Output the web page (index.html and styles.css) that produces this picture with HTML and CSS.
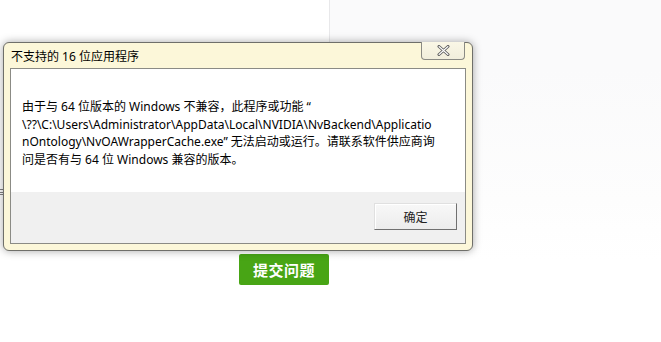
FILE: index.html
```html
<!DOCTYPE html>
<html lang="zh-CN">
<head>
<meta charset="utf-8">
<link rel="stylesheet" href="styles.css">
</head>
<body>
<div class="page">
  <div class="left-pane">
    <div class="spacer"></div>
    <div class="actions"><button class="submit">提交问题</button></div>
  </div>
  <div class="right-pane">
    <div class="right-top"></div>
  </div>
  <div class="edge-mark">≡</div>

  <div class="dialog">
    <div class="titlebar">
      <span class="title">不支持的 16 位应用程序</span>
      <div class="close">
        <svg width="13" height="11" viewBox="0 0 13 11"><path d="M2 1.5 L11 9.5 M11 1.5 L2 9.5" stroke="#5a5a5a" stroke-width="3" stroke-linecap="round"/><path d="M2 1.5 L11 9.5 M11 1.5 L2 9.5" stroke="#ffffff" stroke-width="1.1" stroke-linecap="round"/></svg>
      </div>
    </div>
    <div class="client">
      <div class="message">
        <p>由于与 64 位版本的 Windows 不兼容，此程序或功能 “<br>\??\C:\Users\Administrator\AppData\Local\NVIDIA\NvBackend\Applicatio<br>nOntology\NvOAWrapperCache.exe” 无法启动或运行。请联系软件供应商询<br>问是否有与 64 位 Windows 兼容的版本。</p>
      </div>
      <div class="footer">
        <button class="ok">确定</button>
      </div>
    </div>
  </div>
</div>
</body>
</html>
```
FILE: styles.css
```css
* { box-sizing: border-box; }
html, body { margin: 0; padding: 0; }
body {
  width: 661px;
  height: 342px;
  overflow: hidden;
  font-family: "Noto Sans", "Noto Sans CJK SC", sans-serif;
  background: #ffffff;
}
.page {
  position: relative;
  display: flex;
  width: 661px;
  height: 342px;
}
.left-pane {
  width: 329px;
  height: 342px;
  background: #ffffff;
  display: flex;
  flex-direction: column;
}
.spacer { height: 254px; }
.actions {
  display: flex;
  padding-left: 239px;
}
.submit {
  width: 90px;
  height: 31px;
  border: none;
  border-radius: 2px;
  background: #48a515;
  color: #ffffff;
  font-family: "Noto Sans CJK SC", sans-serif;
  font-size: 15px;
  font-weight: 700;
  letter-spacing: 0.5px;
  padding: 0;
}
.right-pane {
  flex: 1;
  background: linear-gradient(#fafafb 0, #fafafb 70px, #fdfdfd 200px, #ffffff 260px);
  display: flex;
  flex-direction: column;
}
.right-top {
  height: 250px;
  border-left: 1px solid #e8e8ea;
}
.edge-mark {
  position: absolute;
  left: -4px;
  top: 183px;
  font-size: 12px;
  color: #666;
}

.dialog {
  position: absolute;
  left: 3px;
  top: 42px;
  width: 470px;
  height: 209px;
  background: #fcf7d9;
  border: 1px solid #6f6f6a;
  border-radius: 6px;
  box-shadow: 0 0 8px rgba(0,0,0,0.35);
  display: flex;
  flex-direction: column;
  padding: 0 6px 6px 6px;
}
.titlebar {
  height: 25px;
  display: flex;
  align-items: flex-start;
  justify-content: space-between;
}
.title {
  font-family: "Noto Sans", "Noto Sans CJK SC", sans-serif;
  font-size: 12px;
  color: #000;
  padding-top: 4px;
  padding-left: 1px;
}
.close {
  width: 44px;
  height: 18px;
  margin-top: -1px;
  margin-right: 1px;
  border: 1px solid #8a8a84;
  border-top: none;
  border-radius: 0 0 4px 4px;
  background: linear-gradient(#faf7e6, #f1eedc);
  display: flex;
  align-items: center;
  justify-content: center;
}
.client {
  flex: 1;
  display: flex;
  flex-direction: column;
  border: 1px solid #8b8b85;
  background: #ffffff;
}
.message {
  height: 123px;
  padding: 29px 0 0 11px;
  background: #ffffff;
}
.message p {
  margin: 0;
  font-size: 12px;
  line-height: 17.5px;
  color: #000;
}
.footer {
  flex: 1;
  background: #f0f0f0;
  display: flex;
  justify-content: flex-end;
  align-items: flex-start;
  padding: 11px 8px 0 0;
}
.ok {
  width: 83px;
  height: 27px;
  padding: 0;
  border: 1px solid #707070;
  border-top-color: #e0e0e0;
  border-left-color: #e0e0e0;
  background: linear-gradient(#f8f8f8, #ececec);
  box-shadow: inset 1px 1px 0 #ffffff;
  font-family: "Noto Sans CJK SC", sans-serif;
  font-size: 12px;
  color: #222;
}
```
